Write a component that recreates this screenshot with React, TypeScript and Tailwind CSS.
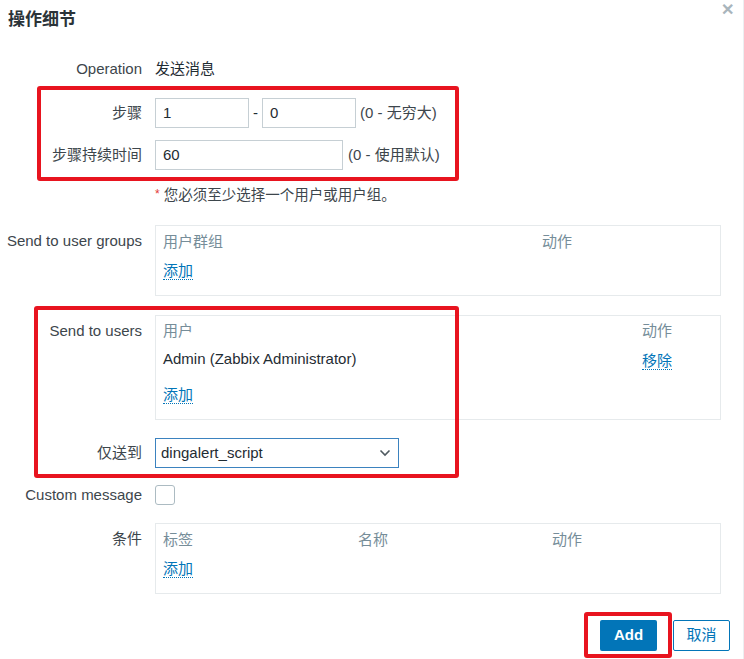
import React from 'react';

const font = { fontFamily: '"Liberation Sans", "Noto Sans CJK SC", Arial, sans-serif' };

function Label({ children, top = false }: { children: React.ReactNode; top?: boolean }) {
  return (
    <div className={`w-[142px] shrink-0 text-right text-[#3d464c] whitespace-nowrap ${top ? 'pt-[5px]' : ''}`}>{children}</div>
  );
}

function Row({ label, top, className = '', children }: { label: React.ReactNode; top?: boolean; className?: string; children?: React.ReactNode }) {
  return (
    <div className={`flex ${top ? 'items-start' : 'items-center'} gap-[13px] ${className}`}>
      <Label top={top}>{label}</Label>
      {children}
    </div>
  );
}

function LinkText({ text }: { text: string }) {
  return <span className="text-[#0275b8] border-b border-dotted border-[#0275b8] leading-[18px]">{text}</span>;
}

function Input({ value, width }: { value: string; width: string }) {
  return (
    <div className={`${width} h-[30px] border border-[#c6cfd4] bg-white px-[7px] flex items-center text-[#1f2c33]`}>{value}</div>
  );
}

export default function App() {
  return (
    <div className="relative w-[744px] h-[659px] bg-white border-r border-[#eceff1] text-[15px] overflow-hidden" style={font}>
      {/* Header */}
      <div className="h-[40px] flex items-center px-[8px]">
        <h2 className="text-[17px] font-bold text-[#2b3338]">操作细节</h2>
      </div>
      <div className="absolute right-[9px] top-[2px] text-[#a9b5bc] text-[16px] font-bold leading-none">✕</div>

      <Row label="Operation" className="mt-[19px] h-[20px]">
        <span className="text-[#1f2c33]">发送消息</span>
      </Row>

      <Row label="步骤" className="mt-[19px]">
        <div className="flex items-center gap-[4px]">
          <Input value="1" width="w-[94px]" />
          <span className="text-[#1f2c33]">-</span>
          <Input value="0" width="w-[94px]" />
          <span className="text-[#3d464c]">(0 - 无穷大)</span>
        </div>
      </Row>

      <Row label="步骤持续时间" className="mt-[12px]">
        <div className="flex items-center gap-[5px]">
          <Input value="60" width="w-[188px]" />
          <span className="text-[#3d464c]">(0 - 使用默认)</span>
        </div>
      </Row>

      <Row label="" className="mt-[16px] h-[20px]">
        <span className="text-[#3d464c] text-[14.5px]">
          <span className="text-[#e33734] text-[12px] align-top mr-[4px]">*</span>您必须至少选择一个用户或用户组。
        </span>
      </Row>

      <Row label="Send to user groups" top className="mt-[19px]">
        <div className="w-[566px] h-[71px] border border-[#e6eaec] px-[7px] pt-[6px]">
          <div className="grid grid-cols-[379px_1fr] text-[#768d99] leading-[20px]">
            <span>用户群组</span>
            <span>动作</span>
          </div>
          <div className="mt-[8px]"><LinkText text="添加" /></div>
        </div>
      </Row>

      <Row label="Send to users" top className="mt-[19px]">
        <div className="w-[566px] h-[105px] border border-[#e6eaec] px-[7px] pt-[5px]">
          <div className="grid grid-cols-[479px_1fr] leading-[20px]">
            <span className="text-[#768d99]">用户</span>
            <span className="text-[#768d99]">动作</span>
            <span className="text-[#1f2c33] mt-[8px]">Admin (Zabbix Administrator)</span>
            <span className="mt-[10px]"><LinkText text="移除" /></span>
          </div>
          <div className="mt-[13px]"><LinkText text="添加" /></div>
        </div>
      </Row>

      <Row label="仅送到" className="mt-[18px]">
        <div className="w-[244px] h-[30px] border border-[#3b82bf] bg-white pl-[5px] pr-[7px] flex items-center justify-between text-[#1f2c33]">
          <span>dingalert_script</span>
          <svg width="12" height="8" viewBox="0 0 12 8" fill="none" stroke="#4f5a60" strokeWidth="1.6">
            <path d="M1.5 1.5 L6 6 L10.5 1.5" />
          </svg>
        </div>
      </Row>

      <Row label="Custom message" className="mt-[17px] h-[20px]">
        <div className="w-[20px] h-[20px] border border-[#acbbc2] rounded-[3px] bg-white" />
      </Row>

      <Row label="条件" top className="mt-[18px]">
        <div className="w-[566px] h-[71px] border border-[#e6eaec] px-[7px] pt-[6px]">
          <div className="grid grid-cols-[195px_194px_1fr] text-[#768d99] leading-[20px]">
            <span>标签</span>
            <span>名称</span>
            <span>动作</span>
          </div>
          <div className="mt-[8px]"><LinkText text="添加" /></div>
        </div>
      </Row>

      {/* Footer buttons */}
      <div className="mt-[26px] flex justify-end gap-[16px] pr-[13px]">
        <button className="w-[57px] h-[31px] bg-[#0275b8] text-white font-bold rounded-[2px]">Add</button>
        <button className="w-[57px] h-[31px] bg-white text-[#0275b8] border border-[#0275b8] rounded-[2px]">取消</button>
      </div>

      {/* Annotation boxes */}
      <div className="absolute left-[37px] top-[86px] w-[422px] h-[95px] border-[4px] border-[#e8141f] rounded-[3px] pointer-events-none" />
      <div className="absolute left-[34px] top-[306px] w-[425px] h-[172px] border-[4px] border-[#e8141f] rounded-[3px] pointer-events-none" />
      <div className="absolute left-[584px] top-[612px] w-[88px] h-[46px] border-[4px] border-[#e8141f] rounded-[3px] pointer-events-none" />
    </div>
  );
}
